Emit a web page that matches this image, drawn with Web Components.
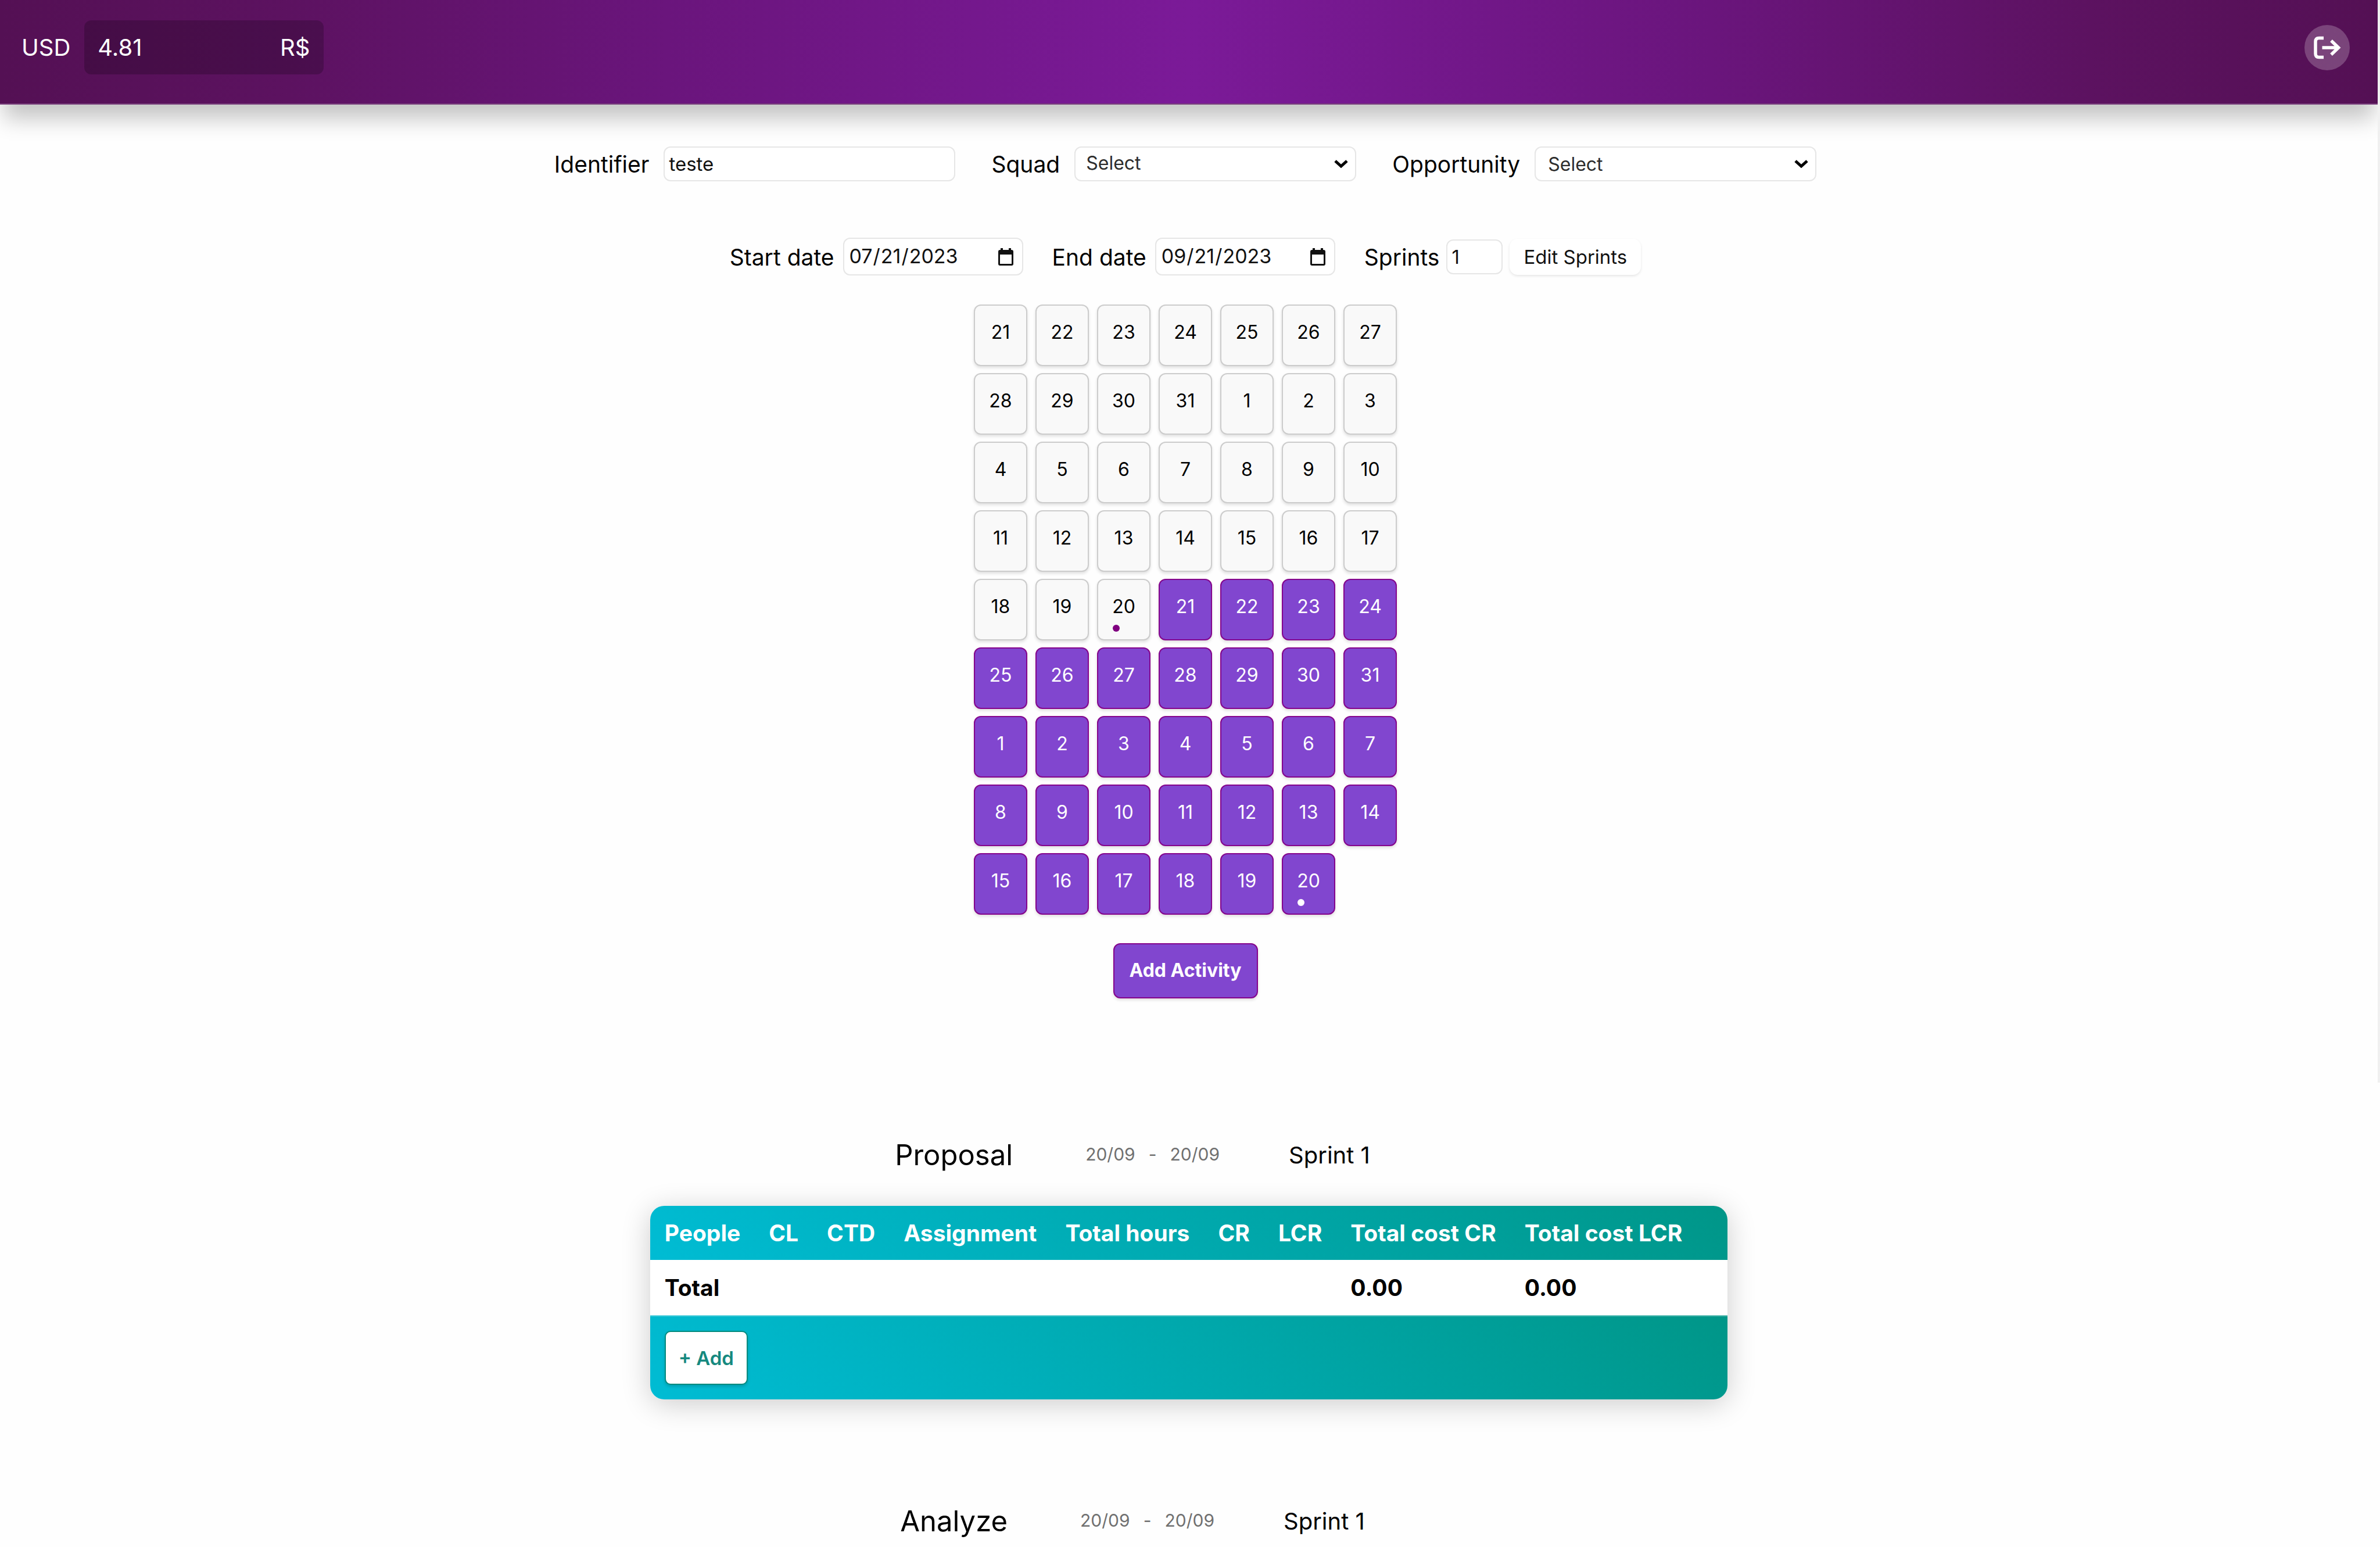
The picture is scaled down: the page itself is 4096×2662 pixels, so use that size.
<!DOCTYPE html>
<html lang="en">
<head>
<meta charset="utf-8">
<title>Proposal calendar</title>
<style>
  body { margin: 0; background: #fefefe; color: #000; font: 400 39px/46px Inter, "Liberation Sans", sans-serif; }
</style>
</head>
<body>
<app-page>
  <app-header slot="header" currency="USD" rate="4.81" unit="R$"></app-header>
  <form-row>
    <text-field label="Identifier" value="teste" size="wide"></text-field>
    <select-field label="Squad"></select-field>
    <select-field label="Opportunity" inset></select-field>
  </form-row>
  <form-row class="dates">
    <date-field label="Start date" value="2023-07-21"></date-field>
    <date-field label="End date" value="2023-09-21"></date-field>
    <text-field label="Sprints" value="1" size="small"><plain-button slot="after">Edit Sprints</plain-button></text-field>
  </form-row>
  <sprint-calendar></sprint-calendar>
  <activity-section slot="activities" name="Proposal" from="20/09" to="20/09" sprint="Sprint 1">
    <cost-table></cost-table>
  </activity-section>
  <activity-section slot="activities" name="Analyze" from="20/09" to="20/09" sprint="Sprint 1"></activity-section>
</app-page>

<script>
class Base extends HTMLElement {
  connectedCallback() {
    if (this.shadowRoot) return;
    this.attachShadow({ mode: 'open' }).innerHTML = `<style>*{box-sizing:border-box}</style>` + this.render();
  }
  a(name) { return this.getAttribute(name) || ''; }
}
const fieldCss = `
  :host{display:flex;align-items:center}
  label{white-space:nowrap;padding-top:2px}
  input,select{margin:0;font:400 33px/38px Inter,"Liberation Sans",sans-serif;color:#111;background:#fff;border:2px solid #e6e6e6;border-radius:12px;outline:0}
  .box{display:grid;align-items:center}
  .box>*{grid-area:1/1}
  .box svg{justify-self:end;pointer-events:none}
`;

customElements.define('app-page', class extends Base {
  render() { return `<style>
    :host{display:flex;align-items:flex-start}
    .content{flex:1;min-width:0}
    main{display:flex;flex-direction:column;align-items:center;padding:72px 12px 0 0}
    .track{width:4px;height:70vh;background:#f0f0f0}
    </style>
    <div class="content"><slot name="header"></slot><main><slot></slot></main><slot name="activities"></slot></div>
    <div class="track"></div>`; }
});

customElements.define('app-header', class extends Base {
  render() { return `<style>
    :host{display:flex;align-items:center;justify-content:space-between;padding:35px 48px 50px 37px;color:#fff;font-size:40px;
      background:linear-gradient(90deg,#541054 0%,#5c1260 12%,#6a157c 28%,#7b1a98 50%,#6a157c 72%,#5c1260 88%,#541054 100%);
      border-bottom:2px solid #79407c;box-shadow:0 30px 36px -6px rgba(0,0,0,.23)}
    .rate{display:flex;align-items:center;gap:24px}
    .pill{display:flex;align-items:center;width:412px;height:93px;padding:0 24px 0 23px;border-radius:12px;background:rgba(0,0,0,.2)}
    input{flex:1;min-width:0;padding:0;border:0;background:none;color:#fff;font:inherit;outline:0}
    button{display:flex;align-items:center;justify-content:center;width:78px;height:78px;padding:0;border:0;border-radius:50%;background:rgba(255,255,255,.22)}
    </style>
    <div class="rate"><label for="rate">${this.a('currency')}</label>
      <div class="pill"><input id="rate" value="${this.a('rate')}"><span>${this.a('unit')}</span></div></div>
    <button aria-label="Log out"><svg width="48" height="40" viewBox="0 0 48 40" fill="none" stroke="#fff" stroke-width="5.500">
      <path d="M18 3.500H10Q4 3.500 4 9.500V30.500Q4 36.500 10 36.500H18"/><path d="M15.500 20H43M31 8L43.500 20L31 32"/></svg></button>`; }
});

customElements.define('form-row', class extends Base {
  render() { return `<style>:host{display:flex;align-items:center;justify-content:center;gap:62px}
    :host(.dates){gap:50px;margin:97px 0 50px}</style><slot></slot>`; }
});

customElements.define('text-field', class extends Base {
  render() { return `<style>${fieldCss}
    :host{gap:25px}
    input{width:502px;height:60px;padding:0 7px}
    :host([size=small]){gap:12px}
    :host([size=small]) input{width:97px}
    </style><label for="f">${this.a('label')}</label><input id="f" value="${this.a('value')}"><slot name="after"></slot>`; }
});

customElements.define('select-field', class extends Base {
  render() { return `<style>${fieldCss}
    :host{gap:25px}
    select{appearance:none;width:485px;height:60px;padding:0 48px 2px 18px;color:#2d2d2d;font-size:32px}
    :host([inset]) select{padding:2px 48px 0 21px}
    svg{margin-right:14px}
    </style><label for="f">${this.a('label')}</label>
    <div class="box"><select id="f"><option>Select</option></select>
    <svg width="24" height="14" viewBox="0 0 24 14" fill="none" stroke="#000" stroke-width="5"><path d="M2 2L12 11L22 2"/></svg></div>`; }
});

customElements.define('date-field', class extends Base {
  render() { return `<style>${fieldCss}
    :host{gap:15px}
    input{width:310px;height:65px;padding:0 8px 2px;font-size:34px}
    input::-webkit-calendar-picker-indicator{opacity:0}
    svg{margin-right:17px}
    </style><label for="f">${this.a('label')}</label>
    <div class="box"><input id="f" type="date" value="${this.a('value')}">
    <svg width="26" height="30" viewBox="0 0 26 30"><path d="M4 0h4v3h10V0h4v3h1q3 0 3 3v21q0 3-3 3H3q-3 0-3-3V6q0-3 3-3h1zM3 11v16h20V11z" fill="#111" fill-rule="evenodd"/></svg></div>`; }
});

customElements.define('plain-button', class extends Base {
  render() { return `<style>:host{display:block}
    button{height:62px;padding:0 24px;border:0;border-radius:14px;background:#fff;color:#111;font:400 33px/38px Inter,"Liberation Sans",sans-serif;box-shadow:0 2px 4px rgba(0,0,0,.1)}
    </style><button><slot></slot></button>`; }
});

customElements.define('calendar-day', class extends Base {
  render() { return `<style>
    :host{display:block}
    button{display:flex;flex-direction:column;width:100%;height:106px;padding:26px 0 0;border:2px solid #ccc;border-radius:12px;background:#f9f9f9;color:#000;font:400 32px/40px Inter,"Liberation Sans",sans-serif;box-shadow:0 3px 5px rgba(0,0,0,.12)}
    span{width:100%;text-align:center}
    :host([active]) button{background:#8146cf;border-color:#85058c;color:#fff}
    i{width:12px;height:12px;margin:11px 0 0 25px;border-radius:50%;background:#800080}
    :host([active]) i{background:#fff}
    </style><button><span><slot></slot></span>${this.hasAttribute('mark') ? '<i></i>' : ''}</button>`; }
});

customElements.define('sprint-calendar', class extends Base {
  render() {
    const days = [];
    const end = Date.UTC(2023, 8, 20);
    for (let t = Date.UTC(2023, 6, 21), i = 0; t <= end; t += 864e5, i++) days.push([new Date(t).getUTCDate(), i]);
    const cells = days.map(([d, i]) => `<calendar-day${i > 30 ? ' active' : ''}${d === 20 ? ' mark' : ''}>${d}</calendar-day>`).join('');
    return `<style>
    :host{display:flex;flex-direction:column;align-items:center;gap:49px}
    .grid{display:grid;grid-template-columns:repeat(7,92px);gap:12px 14px}
    .add{height:95px;padding:0 26px 2px;border:2px solid #85058c;border-radius:12px;background:#8146cf;color:#fff;font:700 32px/38px Inter,"Liberation Sans",sans-serif;box-shadow:0 3px 5px rgba(0,0,0,.12)}
    </style><div class="grid">${cells}</div><button class="add">Add Activity</button>`;
  }
});

customElements.define('activity-section', class extends Base {
  render() { return `<style>
    :host{display:flex;flex-direction:column;align-items:center;margin-top:240px}
    :host(:last-of-type){margin-top:180px}
    header{display:flex;align-items:center;justify-content:center;padding-right:194px;margin-bottom:57px;font-size:40px}
    :host(:last-of-type) header{margin-bottom:0}
    h2{margin:0 125px 0 0;font-weight:400;font-size:49px;line-height:60px}
    .range{display:flex;gap:23px;margin-right:119px;padding-bottom:4px;font-size:30px;line-height:36px;color:#707070}
    </style><header><h2>${this.a('name')}</h2>
    <div class="range"><span>${this.a('from')}</span><span>-</span><span>${this.a('to')}</span></div>
    <span>${this.a('sprint')}</span></header><slot></slot>`; }
});

customElements.define('cost-table', class extends Base {
  render() {
    const heads = ['People', 'CL', 'CTD', 'Assignment', 'Total hours', 'CR', 'LCR', 'Total cost CR', 'Total cost LCR'];
    return `<style>
    :host{display:block;border-radius:24px;overflow:hidden;box-shadow:0 8px 50px rgba(0,0,0,.2)}
    table{border-collapse:separate;border-spacing:0;text-align:left;font-size:39px;color:#000}
    thead,tfoot{background:linear-gradient(45deg,#00bcd4,#009688)}
    thead{color:#fff}
    th,td{height:93px;padding:0 24px 0 25px;font-weight:700;white-space:nowrap}
    td:last-child{padding-right:29px}
    tbody td,tbody th{height:95px;background:#fff}
    tfoot td{height:145px;border-top:2px solid rgba(255,255,255,.4)}
    button{height:93px;padding:0 22px;border:2px solid #008a7e;border-radius:10px;background:#fff;color:#16897f;font:600 33px/38px Inter,"Liberation Sans",sans-serif;box-shadow:0 3px 5px rgba(0,0,0,.15)}
    </style><table>
    <thead><tr>${heads.map(h => `<th scope="col">${h}</th>`).join('')}<td></td></tr></thead>
    <tbody><tr><th scope="row">Total</th><td></td><td></td><td></td><td></td><td></td><td></td><td>0.00</td><td>0.00</td><td></td></tr></tbody>
    <tfoot><tr><td colspan="10"><button>+ Add</button></td></tr></tfoot></table>`;
  }
});
</script>
</body>
</html>
